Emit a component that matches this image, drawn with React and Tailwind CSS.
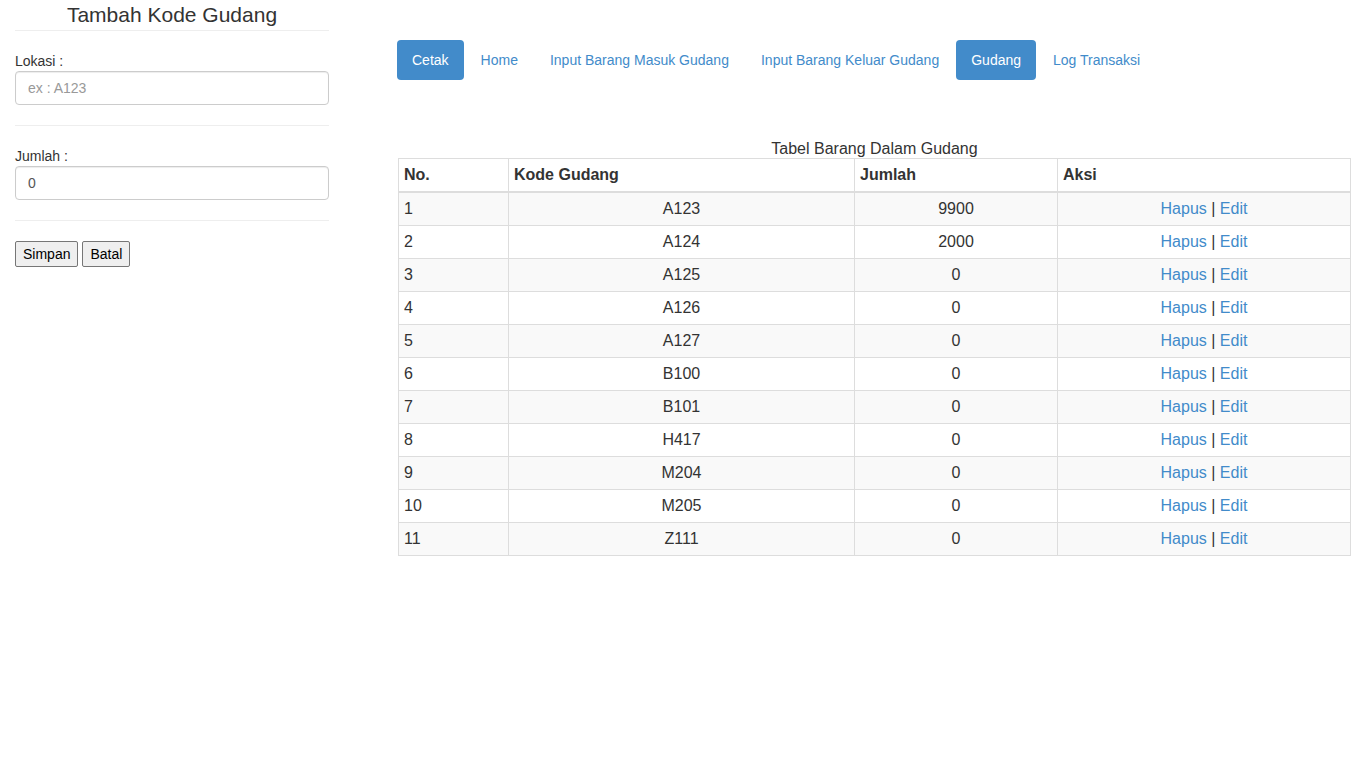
import { useState } from "react";

const rows = [
  ["1", "A123", "9900"],
  ["2", "A124", "2000"],
  ["3", "A125", "0"],
  ["4", "A126", "0"],
  ["5", "A127", "0"],
  ["6", "B100", "0"],
  ["7", "B101", "0"],
  ["8", "H417", "0"],
  ["9", "M204", "0"],
  ["10", "M205", "0"],
  ["11", "Z111", "0"],
];

const menu = [
  { label: "Cetak", active: true },
  { label: "Home" },
  { label: "Input Barang Masuk Gudang" },
  { label: "Input Barang Keluar Gudang" },
  { label: "Gudang", active: true },
  { label: "Log Transaksi" },
];

function App() {
  const [lokasi, setLokasi] = useState("");
  const [jumlah, setJumlah] = useState("0");

  return (
    <div className="min-h-[768px] bg-white text-[#333] font-['Liberation_Sans',Arial,sans-serif] text-[14px] leading-[20px] flex px-[15px]">
      <div className="w-[314px] shrink-0">
        <h3 className="text-[21px] leading-[30px] text-center">Tambah Kode Gudang</h3>
        <hr className="border-t border-[#eee]" />
        <div className="mt-[20px]">
          <label className="block">Lokasi :</label>
          <input
            type="text"
            value={lokasi}
            onChange={(e) => setLokasi(e.target.value)}
            placeholder="ex : A123"
            className="w-full h-[34px] border border-[#ccc] rounded-[4px] px-[12px] text-[14px] text-[#555] placeholder:text-[#999] outline-none shadow-[inset_0_1px_1px_rgba(0,0,0,0.075)]"
          />
        </div>
        <hr className="border-t border-[#eee] mt-[20px]" />
        <div className="mt-[20px]">
          <label className="block">Jumlah :</label>
          <input
            type="text"
            value={jumlah}
            onChange={(e) => setJumlah(e.target.value)}
            className="w-full h-[34px] border border-[#ccc] rounded-[4px] px-[12px] text-[14px] text-[#555] outline-none shadow-[inset_0_1px_1px_rgba(0,0,0,0.075)]"
          />
        </div>
        <hr className="border-t border-[#eee] mt-[20px]" />
        <div className="mt-[20px] flex gap-[4px]">
          <button className="h-[26px] px-[7px] bg-[#efefef] border border-[#767676] rounded-[2px] text-[14px] text-black">Simpan</button>
          <button className="h-[26px] px-[7px] bg-[#efefef] border border-[#767676] rounded-[2px] text-[14px] text-black">Batal</button>
        </div>
      </div>

      <div className="ml-[68px] flex-1">
        <ul className="flex mt-[40px] gap-[2px]">
          {menu.map((m) => (
            <li key={m.label}>
              <a
                href="#"
                className={`block h-[40px] px-[15px] leading-[40px] rounded-[4px] ${m.active ? "bg-[#428bca] text-white" : "text-[#428bca]"}`}
              >
                {m.label}
              </a>
            </li>
          ))}
        </ul>

        <div className="mt-[58px] ml-[1px] w-[953px]">
          <div className="text-center text-[16px] leading-[20px] pt-[1px] -mb-[1px]">Tabel Barang Dalam Gudang</div>
          <table className="w-full border-collapse border border-[#ddd] text-[16px] leading-[22px]">
            <colgroup>
              <col className="w-[110px]" />
              <col className="w-[346px]" />
              <col className="w-[203px]" />
              <col />
            </colgroup>
            <thead>
              <tr>
                <th className="text-left font-bold px-[5px] py-[5px] border border-[#ddd] border-b-2">No.</th>
                <th className="text-left font-bold px-[5px] py-[5px] border border-[#ddd] border-b-2">Kode Gudang</th>
                <th className="text-left font-bold px-[5px] py-[5px] border border-[#ddd] border-b-2">Jumlah</th>
                <th className="text-left font-bold px-[5px] py-[5px] border border-[#ddd] border-b-2">Aksi</th>
              </tr>
            </thead>
            <tbody>
              {rows.map((r, i) => (
                <tr key={r[0]} className={i % 2 === 0 ? "bg-[#f9f9f9]" : "bg-white"}>
                  <td className="px-[5px] py-[5px] border border-[#ddd]">{r[0]}</td>
                  <td className="px-[5px] py-[5px] border border-[#ddd] text-center">{r[1]}</td>
                  <td className="px-[5px] py-[5px] border border-[#ddd] text-center">{r[2]}</td>
                  <td className="px-[5px] py-[5px] border border-[#ddd] text-center">
                    <a href="#" className="text-[#428bca]">Hapus</a> | <a href="#" className="text-[#428bca]">Edit</a>
                  </td>
                </tr>
              ))}
            </tbody>
          </table>
        </div>
      </div>
    </div>
  );
}

export default App;
